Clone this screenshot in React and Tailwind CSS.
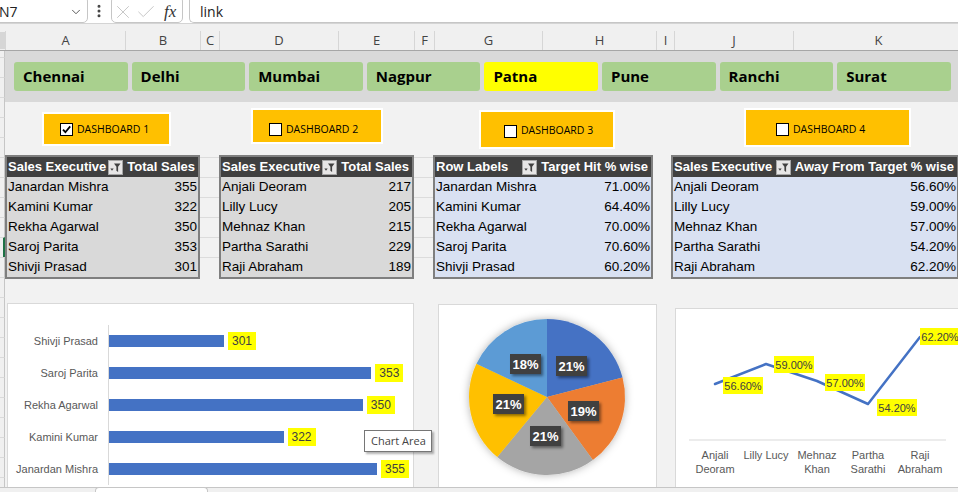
import { ChevronDown, EllipsisVertical, X, Check } from "lucide-react";

const UI = "font-['Open_Sans',sans-serif]";
const CELL = "font-['Liberation_Sans',Arial,sans-serif]";

const columns = [
  { name: "A", cls: "w-[120px]" },
  { name: "B", cls: "w-[75px]" },
  { name: "C", cls: "w-[19px]" },
  { name: "D", cls: "w-[119px]" },
  { name: "E", cls: "w-[76px]" },
  { name: "F", cls: "w-[20px]" },
  { name: "G", cls: "w-[108px]" },
  { name: "H", cls: "w-[114px]" },
  { name: "I", cls: "w-[18px]" },
  { name: "J", cls: "w-[119px]" },
  { name: "K", cls: "w-[170px]" },
];

const cities = ["Chennai", "Delhi", "Mumbai", "Nagpur", "Patna", "Pune", "Ranchi", "Surat"];

const dashboards = [
  { label: "DASHBOARD 1", checked: true, cls: "ml-[37px] mt-[10px] w-[129px] h-[34px] pl-[16px] pt-[1px]" },
  { label: "DASHBOARD 2", checked: false, cls: "ml-[80px] mt-[6px] w-[132px] h-[36px] pl-[16px] pt-[7px]" },
  { label: "DASHBOARD 3", checked: false, cls: "ml-[96px] mt-[8px] w-[136px] h-[39px] pl-[23px] pt-[3px]" },
  { label: "DASHBOARD 4", checked: false, cls: "ml-[129px] mt-[6px] w-[167px] h-[39px] pl-[30px] pt-[4px]" },
];

const tables = [
  {
    first: "Sales Executive",
    second: "Total Sales",
    width: "w-[195px]",
    rowBg: "bg-[#d9d9d9]",
    rows: [
      ["Janardan Mishra", "355"],
      ["Kamini Kumar", "322"],
      ["Rekha Agarwal", "350"],
      ["Saroj Parita", "353"],
      ["Shivji Prasad", "301"],
    ],
  },
  {
    first: "Sales Executive",
    second: "Total Sales",
    width: "w-[195px]",
    rowBg: "bg-[#d9d9d9]",
    rows: [
      ["Anjali Deoram", "217"],
      ["Lilly Lucy", "205"],
      ["Mehnaz Khan", "215"],
      ["Partha Sarathi", "229"],
      ["Raji Abraham", "189"],
    ],
  },
  {
    first: "Row Labels",
    second: "Target Hit % wise",
    width: "w-[220px]",
    rowBg: "bg-[#d9e1f2]",
    rows: [
      ["Janardan Mishra", "71.00%"],
      ["Kamini Kumar", "64.40%"],
      ["Rekha Agarwal", "70.00%"],
      ["Saroj Parita", "70.60%"],
      ["Shivji Prasad", "60.20%"],
    ],
  },
  {
    first: "Sales Executive",
    second: "Away From Target % wise",
    width: "w-[288px]",
    rowBg: "bg-[#d9e1f2]",
    rows: [
      ["Anjali Deoram", "56.60%"],
      ["Lilly Lucy", "59.00%"],
      ["Mehnaz Khan", "57.00%"],
      ["Partha Sarathi", "54.20%"],
      ["Raji Abraham", "62.20%"],
    ],
  },
];

const bars = [
  { name: "Shivji Prasad", value: 301 },
  { name: "Saroj Parita", value: 353 },
  { name: "Rekha Agarwal", value: 350 },
  { name: "Kamini Kumar", value: 322 },
  { name: "Janardan Mishra", value: 355 },
];

const slices = [
  { share: 0.21, color: "#4472c4", label: "21%", x: 117, y: 51 },
  { share: 0.19, color: "#ed7d31", label: "19%", x: 129, y: 96 },
  { share: 0.21, color: "#a5a5a5", label: "21%", x: 91, y: 121 },
  { share: 0.21, color: "#ffc000", label: "21%", x: 54, y: 89 },
  { share: 0.18, color: "#5b9bd5", label: "18%", x: 71, y: 49 },
];

const linePoints = [
  { top: "Anjali", bottom: "Deoram", value: "56.60%", x: 39, y: 75, lx: 47, ly: 68 },
  { top: "Lilly Lucy", bottom: "", value: "59.00%", x: 90, y: 55, lx: 98, ly: 47 },
  { top: "Mehnaz", bottom: "Khan", value: "57.00%", x: 141, y: 72, lx: 149, ly: 65 },
  { top: "Partha", bottom: "Sarathi", value: "54.20%", x: 192, y: 95, lx: 201, ly: 90 },
  { top: "Raji", bottom: "Abraham", value: "62.20%", x: 244, y: 28, lx: 244, ly: 19 },
];

const FilterIcon = () => (
  <svg width="15" height="15" viewBox="0 0 15 15" className="shrink-0">
    <rect x="0.5" y="0.5" width="14" height="14" fill="#e7e6e6" stroke="#a6a6a6" />
    <path d="M6 3.5h6.5l-2.4 3.2v5.3l-1.7-1.2v-4.1z" fill="#404040" />
    <path d="M2.3 8.6h3.4l-1.7 2.1z" fill="#404040" />
  </svg>
);

const SheetTable = ({ table }) => (
  <div className={`${table.width} shrink-0 border-2 border-[#7f7f7f] ${CELL}`}>
    <div className="h-[20px] bg-[#404040] text-white text-[13px] font-bold flex items-center pl-[1px] pr-[3px]">
      <span className="whitespace-nowrap">{table.first}</span>
      <span className="flex-1" />
      <FilterIcon />
      <span className="ml-[4px] whitespace-nowrap">{table.second}</span>
    </div>
    {table.rows.map(([name, value]) => (
      <div key={name} className={`h-[20px] ${table.rowBg} flex items-center justify-between pl-[1px] pr-[1px] text-[13.5px] text-black`}>
        <span>{name}</span>
        <span>{value}</span>
      </div>
    ))}
  </div>
);

const GridGap = ({ cls }) => (
  <div className={`${cls} shrink-0 pt-[2px]`}>
    {[0, 1, 2, 3, 4, 5].map((i) => (
      <div key={i} className="h-[20px] border-t border-[#dcdcdc]" />
    ))}
  </div>
);

const slicePath = (cx, cy, r, from, to) => {
  const a0 = from * Math.PI * 2;
  const a1 = to * Math.PI * 2;
  const x0 = cx + r * Math.sin(a0);
  const y0 = cy - r * Math.cos(a0);
  const x1 = cx + r * Math.sin(a1);
  const y1 = cy - r * Math.cos(a1);
  const large = to - from > 0.5 ? 1 : 0;
  return `M${cx} ${cy} L${x0} ${y0} A${r} ${r} 0 ${large} 1 ${x1} ${y1} Z`;
};

const PieChart = () => {
  let acc = 0;
  return (
    <svg width="217" height="220" viewBox="0 0 217 220" className={CELL}>
      <defs>
        <filter id="pieGlow" x="-20%" y="-20%" width="140%" height="140%">
          <feDropShadow dx="0" dy="0" stdDeviation="4" floodColor="#000" floodOpacity="0.3" />
        </filter>
        <filter id="tagShadow" x="-20%" y="-20%" width="150%" height="160%">
          <feDropShadow dx="2" dy="2" stdDeviation="1.5" floodColor="#000" floodOpacity="0.45" />
        </filter>
      </defs>
      <g filter="url(#pieGlow)">
        {slices.map((s) => {
          const d = slicePath(108, 92, 78, acc, acc + s.share);
          acc += s.share;
          return <path key={s.color} d={d} fill={s.color} />;
        })}
      </g>
      {slices.map((s) => (
        <g key={s.color + s.label}>
          <rect x={s.x} y={s.y} width="31" height="20" fill="#404040" filter="url(#tagShadow)" />
          <text x={s.x + 15.5} y={s.y + 14.5} textAnchor="middle" fill="#fff" fontSize="13" fontWeight="bold">
            {s.label}
          </text>
        </g>
      ))}
    </svg>
  );
};

const LineChart = () => (
  <svg width="288" height="220" viewBox="0 0 288 220" className={CELL}>
    <line x1="13" y1="131" x2="270" y2="131" stroke="#d9d9d9" strokeWidth="1" />
    <polyline
      points={linePoints.map((p) => `${p.x},${p.y}`).join(" ")}
      fill="none"
      stroke="#4472c4"
      strokeWidth="2.5"
      strokeLinejoin="round"
      strokeLinecap="round"
    />
    {linePoints.map((p) => (
      <g key={p.value}>
        <rect x={p.lx} y={p.ly} width="40" height="17" fill="#ffff00" />
        <text x={p.lx + 20} y={p.ly + 12.5} textAnchor="middle" fill="#404040" fontSize="11">
          {p.value}
        </text>
        <text x={p.x} y="150" textAnchor="middle" fill="#595959" fontSize="11">
          {p.top}
        </text>
        {p.bottom && (
          <text x={p.x} y="164" textAnchor="middle" fill="#595959" fontSize="11">
            {p.bottom}
          </text>
        )}
      </g>
    ))}
  </svg>
);

const App = () => {
  return (
    <div className={`w-[958px] h-[492px] overflow-hidden bg-white ${UI} flex flex-col`}>
      {/* Formula bar */}
      <div className="h-[24px] shrink-0 flex items-start overflow-hidden bg-white border-b border-[#d4d4d4]">
        <div className="-ml-[8px] -mt-[4px] h-[27px] w-[96px] border border-[#c6c6c6] rounded-[5px] flex items-center pt-[4px] pl-[6px] pr-[4px]">
          <span className="text-[14px] text-[#222]">N7</span>
          <ChevronDown size={14} strokeWidth={1.5} className="ml-auto text-[#444]" />
        </div>
        <EllipsisVertical size={16} strokeWidth={2.5} className="ml-[3px] mt-[3px] text-[#444]" />
        <div className="ml-[4px] -mt-[4px] h-[27px] w-[72px] border border-[#c6c6c6] rounded-[5px] flex items-center pt-[4px]">
          <X size={22} strokeWidth={1} className="text-[#c3c3c3]" />
          <Check size={22} strokeWidth={1} className="ml-[1px] text-[#c3c3c3]" />
          <span className="ml-[7px] text-[17px] italic text-[#333] font-['Liberation_Serif',serif]">fx</span>
        </div>
        <div className="ml-[6px] -mt-[4px] h-[27px] flex-1 border border-r-0 border-[#c6c6c6] rounded-l-[5px] flex items-center pt-[4px] pl-[10px]">
          <span className="text-[14px] text-[#222]">link</span>
        </div>
      </div>

      {/* Column headers */}
      <div className="h-[27px] shrink-0 bg-[#f0f0f0] border-b border-[#a6a6a6] flex flex-col">
        <div className="h-[9px]" />
        <div className="flex-1 flex">
          <div className="w-[5px] shrink-0 my-[1px] bg-[#d6d6d6]" />
          {columns.map((c) => (
            <div
              key={c.name}
              className={`${c.cls} shrink-0 border-l border-[#d6d6d6] flex items-center justify-center text-[13px] text-[#444]`}
            >
              {c.name}
            </div>
          ))}
        </div>
      </div>

      {/* Sheet body */}
      <div className="flex-1 flex min-h-0">
        {/* Row header strip */}
        <div className="w-[5px] shrink-0 bg-[#f0f0f0] flex flex-col overflow-hidden">
          <div className="h-[6px] shrink-0 border-r border-[#c6c6c6]" />
          {Array.from({ length: 22 }).map((_, i) => (
            <div
              key={i}
              className={`h-[20px] shrink-0 border-t border-[#dadada] ${
                i === 9 ? "border-r-2 border-r-[#1e7145]" : "border-r border-r-[#c6c6c6]"
              }`}
            />
          ))}
        </div>

        <div className="flex-1 flex flex-col bg-[#f2f2f2] min-w-0">
          {/* City slicer */}
          <div className="h-[51px] shrink-0 bg-[#d9d9d9] flex items-start pt-[11px] pl-[9px] gap-[4px]">
            {cities.map((city) => (
              <div
                key={city}
                className={`w-[113.6px] h-[29px] shrink-0 rounded-[3px] flex items-center pl-[9px] text-[15px] font-bold text-black ${
                  city === "Patna" ? "bg-[#ffff00]" : "bg-[#a9d08e]"
                }`}
              >
                {city}
              </div>
            ))}
          </div>

          {/* Dashboard toggles */}
          <div className="h-[53px] shrink-0 flex items-start">
            {dashboards.map((d) => (
              <div
                key={d.label}
                className={`${d.cls} shrink-0 bg-[#ffc000] border-2 border-white flex items-center`}
              >
                <div className="w-[13px] h-[13px] border border-black bg-white flex items-center justify-center">
                  {d.checked && (
                    <svg width="11" height="11" viewBox="0 0 11 11">
                      <path d="M2 5.6 L4.4 8.2 L9.2 2.4" fill="none" stroke="#000" strokeWidth="1.8" />
                    </svg>
                  )}
                </div>
                <span className="ml-[4px] text-[10.5px] text-black">{d.label}</span>
              </div>
            ))}
          </div>

          {/* Pivot tables */}
          <div className="h-[124px] shrink-0 flex items-start">
            <SheetTable table={tables[0]} />
            <GridGap cls="w-[19px]" />
            <SheetTable table={tables[1]} />
            <GridGap cls="w-[19px]" />
            <SheetTable table={tables[2]} />
            <div className="w-[18px] shrink-0" />
            <SheetTable table={tables[3]} />
          </div>

          {/* Charts */}
          <div className="flex-1 min-h-0 overflow-hidden flex items-start">
            <div className="ml-[2px] mt-[24px] w-[407px] h-[220px] shrink-0 bg-white border border-[#d9d9d9] relative">
              <div className={`pt-[21px] ${CELL}`}>
                {bars.map((b) => (
                  <div key={b.name} className="h-[32px] flex items-center">
                    <div className="w-[90px] text-right text-[11px] text-[#595959] whitespace-nowrap">{b.name}</div>
                    <div className="ml-[10px] h-full border-l border-[#d9d9d9] flex items-center">
                      <div className="h-[12px] bg-[#4472c4]" style={{ width: `${(b.value - 260.4) * 2.833}px` }} />
                      <div className="ml-[4px] h-[18px] px-[4px] bg-[#ffff00] text-[12px] leading-[18px] text-[#404040]">
                        {b.value}
                      </div>
                    </div>
                  </div>
                ))}
              </div>
              <div className="absolute left-[356px] top-[126px] w-[68px] h-[22px] bg-white border border-[#767676] shadow-[2px_2px_2px_rgba(0,0,0,0.3)] flex items-center pl-[6px] text-[11px] text-[#444] z-10">
                Chart Area
              </div>
            </div>

            <div className="ml-[24px] mt-[25px] w-[219px] h-[220px] shrink-0 bg-white border border-[#d9d9d9]">
              <PieChart />
            </div>

            <div className="ml-[18px] mt-[29px] w-[290px] h-[220px] shrink-0 bg-white border border-[#d9d9d9]">
              <LineChart />
            </div>
          </div>
        </div>
      </div>

      {/* Sheet tabs */}
      <div className="h-[5px] shrink-0 bg-[#f0f0f0] border-t border-[#c6c6c6] flex">
        <div className="ml-[95px] -mt-[1px] w-[113px] h-[6px] bg-white border-x border-t border-[#c6c6c6] rounded-t-[4px]" />
      </div>
    </div>
  );
};

export default App;
